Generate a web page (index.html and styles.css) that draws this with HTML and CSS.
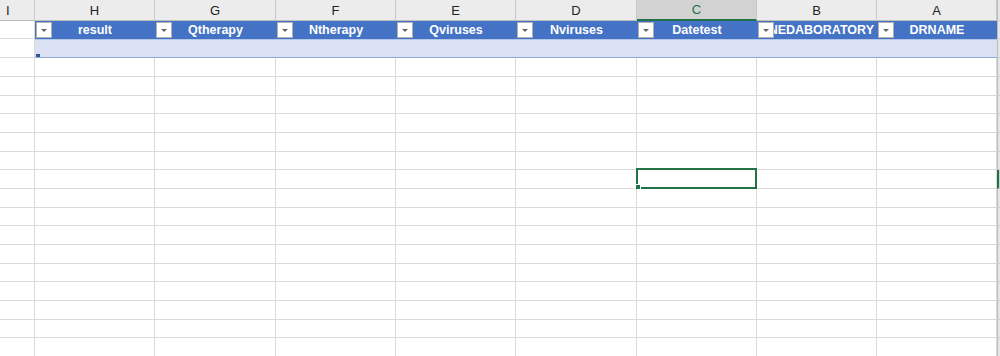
FILE: index.html
```html
<!DOCTYPE html>
<html lang="en">
<head>
  <meta charset="UTF-8" />
  <title>Sheet1</title>
  <link rel="stylesheet" href="styles.css">
</head>
<body>
  <div class="sheet">
    <div class="row col-heads">
      <div class="head">I</div>
      <div class="head">H</div>
      <div class="head">G</div>
      <div class="head">F</div>
      <div class="head">E</div>
      <div class="head">D</div>
      <div class="head active">C</div>
      <div class="head">B</div>
      <div class="head">A</div>
      <div class="edge"></div>
    </div>
    <div class="row table-head">
      <div class="cell"></div>
      <div class="tcell"><span class="filter"></span>result</div>
      <div class="tcell"><span class="filter"></span>Qtherapy</div>
      <div class="tcell"><span class="filter"></span>Ntherapy</div>
      <div class="tcell"><span class="filter"></span>Qviruses</div>
      <div class="tcell"><span class="filter"></span>Nviruses</div>
      <div class="tcell"><span class="filter"></span>Datetest</div>
      <div class="tcell long"><span class="filter"></span>ANEDABORATORY</div>
      <div class="tcell"><span class="filter"></span>DRNAME</div>
      <div class="edge"></div>
    </div>
    <div class="row table-body">
      <div class="cell"></div>
      <div class="bcell first"><span class="resize"></span></div>
      <div class="bcell"></div>
      <div class="bcell"></div>
      <div class="bcell"></div>
      <div class="bcell"></div>
      <div class="bcell"></div>
      <div class="bcell"></div>
      <div class="bcell"></div>
      <div class="edge"></div>
    </div>
    <div id="rows"></div>
  </div>
  <script>
    // empty rows under the table, one row has the selected cell in column C
    const rows = document.getElementById('rows');
    for (let r = 0; r < 16; r++) {
      const row = document.createElement('div');
      row.className = 'row';
      for (let c = 0; c < 9; c++) {
        const cell = document.createElement('div');
        cell.className = 'cell';
        if (r === 6 && c === 6) {
          const sel = document.createElement('span');
          sel.className = 'selection';
          cell.appendChild(sel);
        }
        row.appendChild(cell);
      }
      const edge = document.createElement('div');
      edge.className = r === 6 ? 'edge current' : 'edge';
      row.appendChild(edge);
      rows.appendChild(row);
    }
  </script>
</body>
</html>
```

FILE: styles.css
```css
body {
  margin: 0;
  background: #fff;
  font-family: 'Liberation Sans', Arial, sans-serif;
  overflow: hidden;
}
.sheet {
  width: 1000px;
  height: 356px;
  overflow: hidden;
}
.row {
  display: grid;
  grid-template-columns: 35px 120px 121px 120px 120px 121px 120px 120px 120px 3px;
  height: 19px;
  box-sizing: border-box;
}
#rows .row:nth-child(3n) {
  height: 18px;
}
.cell {
  border-right: 1px solid #dadada;
  border-bottom: 1px solid #dadada;
  position: relative;
}
.edge {
  background: #e6e6e6;
  border-left: 1px solid #bcbcbc;
  border-bottom: 1px solid #d0d0d0;
  box-sizing: border-box;
}
.edge.current {
  background: #d2d2d2;
  border-left: 2px solid #217346;
}

/* column letters */
.col-heads {
  height: 21px;
}
.head {
  background: #ececec;
  border-right: 1px solid #c9c9c9;
  border-bottom: 1px solid #bdbdbd;
  font-size: 13px;
  color: #222;
  display: flex;
  align-items: center;
  justify-content: center;
}
.head:first-child {
  justify-content: flex-start;
  padding-left: 6px;
}
.head.active {
  background: #d2d2d2;
  color: #217346;
  border-bottom: 2px solid #217346;
}

/* table header row */
.table-head {
  height: 18px;
}
.tcell {
  background: #4472c4;
  color: #fff;
  font-weight: bold;
  font-size: 12.5px;
  display: flex;
  align-items: center;
  justify-content: center;
  position: relative;
  white-space: nowrap;
  overflow: hidden;
}
.tcell.long {
  justify-content: flex-end;
  padding-right: 3px;
}
.filter {
  position: absolute;
  left: 1px;
  top: 1px;
  width: 16px;
  height: 16px;
  background: #fff;
  border: 1px solid #b0b0b0;
  box-sizing: border-box;
}
.filter::after {
  content: '';
  position: absolute;
  left: 4px;
  top: 6px;
  border-left: 3px solid transparent;
  border-right: 3px solid transparent;
  border-top: 3px solid #666;
}

/* table body row */
.table-body .bcell {
  background: #d9e1f2;
  border-top: 1px solid #b4c6e7;
  border-bottom: 1px solid #8ea9db;
  position: relative;
}
.table-body .cell {
  border-bottom: 1px solid #dadada;
}
.resize {
  position: absolute;
  left: 1px;
  bottom: 0;
  width: 4px;
  height: 3px;
  background: #2f5597;
}

.selection {
  position: absolute;
  left: -1px;
  top: -2px;
  right: -1px;
  bottom: -1px;
  border: 2px solid #217346;
}
.selection::after {
  content: '';
  position: absolute;
  left: -3px;
  bottom: -3px;
  width: 4px;
  height: 4px;
  background: #217346;
  border: 1px solid #fff;
}
```
